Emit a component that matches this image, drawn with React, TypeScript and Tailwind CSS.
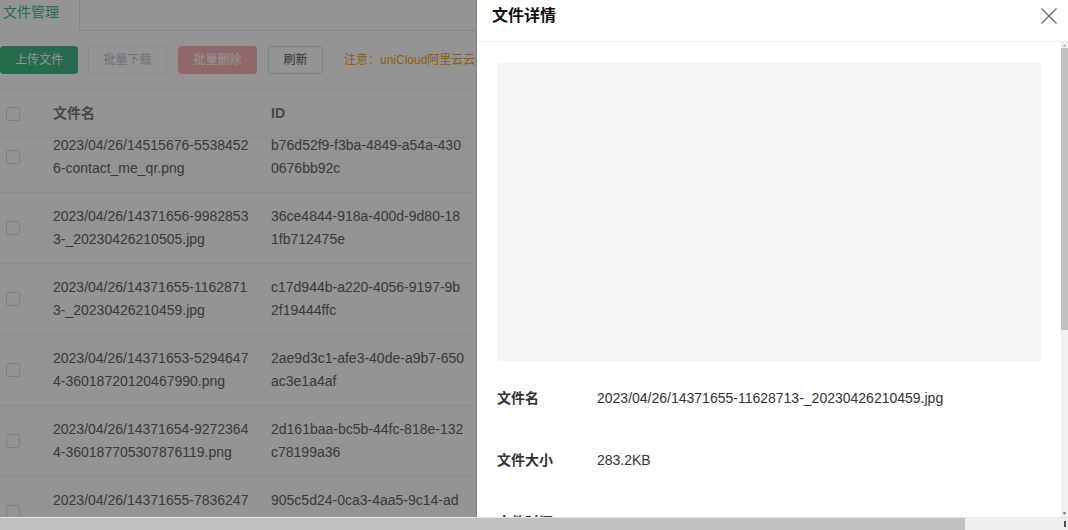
import React from 'react';

// file names / ids are shown already wrapped as in the table column
const rows = [
  { name: ['2023/04/26/14515676-5538452', '6-contact_me_qr.png'], id: ['b76d52f9-f3ba-4849-a54a-430', '0676bb92c'] },
  { name: ['2023/04/26/14371656-9982853', '3-_20230426210505.jpg'], id: ['36ce4844-918a-400d-9d80-18', '1fb712475e'] },
  { name: ['2023/04/26/14371655-1162871', '3-_20230426210459.jpg'], id: ['c17d944b-a220-4056-9197-9b', '2f19444ffc'] },
  { name: ['2023/04/26/14371653-5294647', '4-36018720120467990.png'], id: ['2ae9d3c1-afe3-40de-a9b7-650', 'ac3e1a4af'] },
  { name: ['2023/04/26/14371654-9272364', '4-360187705307876119.png'], id: ['2d161baa-bc5b-44fc-818e-132', 'c78199a36'] },
  { name: ['2023/04/26/14371655-7836247', '4-360187705307812345.png'], id: ['905c5d24-0ca3-4aa5-9c14-ad', '3e2b1f0c77'] },
];

const Checkbox: React.FC = () => (
  <span className="block w-[14px] h-[14px] rounded-[2px] border border-[#dcdfe6] bg-white" />
);

const FilePage: React.FC = () => (
  <div className="absolute inset-0 bg-white">
    {/* tabs */}
    <div className="h-[31px] flex border-b border-[#e4e7ed]">
      <div className="w-[80px] h-[31px] -mb-px bg-white border-r border-[#e4e7ed] pl-[3px] text-[14px] leading-[24px] text-[#42b983]">
        文件管理
      </div>
    </div>

    {/* toolbar */}
    <div className="flex items-center mt-[15px] h-[28px] text-[12px]">
      <button className="w-[78px] h-[28px] rounded-[4px] bg-[#42b983] text-white">上传文件</button>
      <button className="ml-[10px] w-[79px] h-[28px] rounded-[4px] border border-[#ebeef5] bg-white text-[#c0c4cc]">批量下载</button>
      <button className="ml-[11px] w-[79px] h-[28px] rounded-[4px] bg-[#f7b6b6] text-white">批量删除</button>
      <button className="ml-[11px] w-[55px] h-[28px] rounded-[4px] border border-[#dcdfe6] bg-white text-[#555]">刷新</button>
      <span className="ml-[21px] whitespace-nowrap text-[#f0a022]">注意：uniCloud阿里云云存储暂不支持批量删除文件</span>
    </div>

    {/* table */}
    <div className="mt-[15px] border-t border-[#ebeef5]">
      <div className="h-[48px] flex items-center border-b border-[#ebeef5] text-[14px] font-bold text-[#7a7c80]">
        <div className="w-[41px] pl-[6px]"><Checkbox /></div>
        <div className="w-[218px] pl-[12px]">文件名</div>
        <div className="pl-[12px]">ID</div>
      </div>
      <div className="h-[400px] overflow-hidden">
        <div className="-mt-[16px]">
          {rows.map((r) => (
            <div key={r.id[0]} className="h-[71px] flex items-center border-b border-[#ebeef5] text-[14px] leading-[23px] text-[#606266]">
              <div className="w-[41px] pl-[6px]"><Checkbox /></div>
              <div className="w-[218px] pl-[12px] pr-[10px] whitespace-nowrap">
                <div>{r.name[0]}</div>
                <div>{r.name[1]}</div>
              </div>
              <div className="pl-[12px] whitespace-nowrap">
                <div>{r.id[0]}</div>
                <div>{r.id[1]}</div>
              </div>
            </div>
          ))}
        </div>
      </div>
    </div>
  </div>
);

const InfoRow: React.FC<{ label: string; value: string }> = ({ label, value }) => (
  <div className="flex py-[20px] text-[14px] leading-[22px] text-[#333]">
    <div className="w-[100px] shrink-0 font-bold">{label}</div>
    <div>{value}</div>
  </div>
);

const DetailDrawer: React.FC = () => (
  <aside className="absolute top-0 right-0 bottom-0 w-[591px] bg-white flex flex-col shadow-[-1px_0_0_#7d7d7d]">
    <div className="h-[42px] shrink-0 flex items-center justify-between border-b border-[#eeeeee] pl-[15px] pr-[10px] pb-[9px]">
      <h3 className="text-[16px] font-bold text-[#111]">文件详情</h3>
      <svg width="18" height="18" viewBox="0 0 18 18">
        <path d="M1.5 1.5 L16.5 16.5 M16.5 1.5 L1.5 16.5" stroke="#6b6b6b" strokeWidth="1.3" fill="none" />
      </svg>
    </div>
    <div className="flex-1 min-h-0 flex">
      <div className="flex-1 overflow-hidden px-[20px] pt-[20px]">
        <div className="h-[300px] bg-[#f5f6f8]" />
        <div className="mt-[5px]">
          <InfoRow label="文件名" value="2023/04/26/14371655-11628713-_20230426210459.jpg" />
          <InfoRow label="文件大小" value="283.2KB" />
          <InfoRow label="文件时间" value="2023-04-26 21:02:13" />
        </div>
      </div>
      {/* vertical scrollbar */}
      <div className="w-[7px] bg-[#f1f1f1] flex flex-col">
        <svg width="7" height="6" viewBox="0 0 7 6" className="shrink-0"><path d="M1.5 4.5 L3.5 2.5 L5.5 4.5 Z" fill="#a3a3a3" /></svg>
        <div className="h-[282px] bg-[#c1c1c1]" />
        <div className="flex-1" />
        <svg width="7" height="6" viewBox="0 0 7 6" className="shrink-0"><path d="M1.5 1.5 L3.5 3.5 L5.5 1.5 Z" fill="#505050" /></svg>
      </div>
    </div>
  </aside>
);

export default function App() {
  return (
    <div className="w-[1068px] h-[530px] flex flex-col overflow-hidden bg-white font-['Liberation_Sans','Noto_Sans_CJK_SC',sans-serif]">
      <div className="relative flex-1 min-h-0 overflow-hidden">
        <FilePage />
        <div className="absolute inset-0 bg-black/[0.42]" />
        <DetailDrawer />
      </div>
      {/* horizontal page scrollbar */}
      <div className="h-[13px] shrink-0 flex bg-[#f0f0f0] border-t border-[#e6e6e6]">
        <div className="w-[965px] bg-[#c1c1c1]" />
        <div className="flex-1" />
        <div className="w-[7px] flex items-center justify-center">
          <span className="block w-[2px] h-[6px] bg-[#505050]" />
        </div>
      </div>
    </div>
  );
}
